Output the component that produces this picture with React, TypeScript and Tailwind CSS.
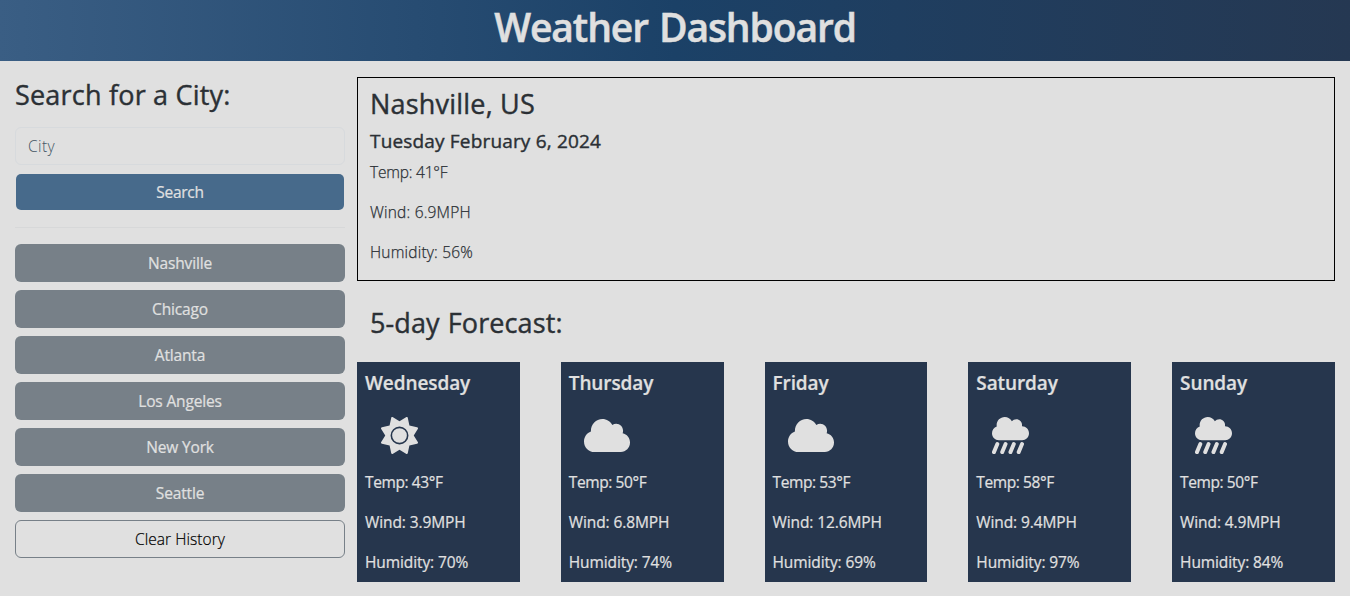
type IconName = "sun" | "cloud" | "rain";

type Day = {
  name: string;
  icon: IconName;
  temp: string;
  wind: string;
  humidity: string;
};

const cities = ["Nashville", "Chicago", "Atlanta", "Los Angeles", "New York", "Seattle"];

const days: Day[] = [
  { name: "Wednesday", icon: "sun", temp: "43°F", wind: "3.9MPH", humidity: "70%" },
  { name: "Thursday", icon: "cloud", temp: "50°F", wind: "6.8MPH", humidity: "74%" },
  { name: "Friday", icon: "cloud", temp: "53°F", wind: "12.6MPH", humidity: "69%" },
  { name: "Saturday", icon: "rain", temp: "58°F", wind: "9.4MPH", humidity: "97%" },
  { name: "Sunday", icon: "rain", temp: "50°F", wind: "4.9MPH", humidity: "84%" },
];

function WeatherIcon({ name }: { name: IconName }) {
  if (name === "sun") {
    return (
      <svg viewBox="0 0 512 512" className="ml-[0.3px] h-[37px] w-[37px] shrink-0" fill="currentColor">
        <path d="M361.5 1.2c5 2.1 8.6 6.6 9.6 11.9L393 119l105.9 21.8c5.3 1 9.8 4.6 11.9 9.6s1.5 10.7-1.6 15.2L453 256l56.2 90.3c3.1 4.5 3.7 10.2 1.6 15.2s-6.6 8.6-11.9 9.6L393 393 371.1 498.9c-1 5.3-4.6 9.8-9.6 11.9s-10.7 1.5-15.2-1.6L256 453l-90.3 56.2c-4.5 3.1-10.2 3.7-15.2 1.6s-8.6-6.6-9.6-11.9L119 393 13.1 371.1c-5.3-1-9.8-4.6-11.9-9.6s-1.5-10.7 1.6-15.2L59 256 2.8 165.7c-3.1-4.5-3.7-10.2-1.6-15.2s6.6-8.6 11.9-9.6L119 119 140.9 13.1c1-5.3 4.6-9.8 9.6-11.9s10.7-1.5 15.2 1.6L256 59 346.3 2.8c4.5-3.1 10.2-3.7 15.2-1.6z" />
        <circle cx="256" cy="256" r="113" fill="none" stroke="#26364d" strokeWidth="22" />
      </svg>
    );
  }
  if (name === "cloud") {
    return (
      <svg viewBox="0 32 640 448" className="-mt-px h-[33px] w-[46px] shrink-0" fill="currentColor" preserveAspectRatio="none">
        <path d="M0 336c0 79.5 64.5 144 144 144h368c70.7 0 128-57.3 128-128 0-61.9-44-113.6-102.4-125.4 4.1-10.7 6.4-22.4 6.4-34.6 0-53-43-96-96-96-19.7 0-38.1 6-53.3 16.2C367 64.2 315.3 32 256 32 167.6 32 96 103.6 96 192c0 2.7.1 5.4.2 8.1C40.2 219.8 0 273.2 0 336z" />
      </svg>
    );
  }
  return (
    <svg viewBox="0 0 512 512" className="h-[37px] w-[37px] shrink-0" fill="currentColor">
      <path d="M96 320c-53 0-96-43-96-96 0-42.5 27.6-78.6 65.9-91.2C64.7 126.1 64 119.1 64 112 64 50.1 114.1 0 176 0c43.1 0 80.5 24.3 99.2 60 14.7-17.1 36.5-28 60.8-28 44.2 0 80 35.8 80 80 0 5.5-.6 10.8-1.6 16h1.6c53 0 96 43 96 96s-43 96-96 96H96z" />
      <path
        d="M74 374L27 486M188 374l-47 112M302 374l-47 112M416 374l-47 112"
        fill="none"
        stroke="currentColor"
        strokeWidth="54"
        strokeLinecap="round"
      />
    </svg>
  );
}

function DayCard({ day }: { day: Day }) {
  return (
    <article className="h-[220px] w-[162.9px] bg-[#26364d] px-2 pt-2 text-[#e0e0e0]">
      <h4 className="h-[26px] text-[19px] leading-[26px] font-semibold tracking-[-0.1px] [-webkit-text-stroke:0.2px]">
        {day.name}
      </h4>
      <div className="flex h-[74px] items-center pt-[5px] pl-[15.4px]">
        <WeatherIcon name={day.icon} />
      </div>
      <div className="flex flex-col gap-4 text-[15.5px] leading-6 tracking-[-0.1px] [-webkit-text-stroke:0.2px]">
        <p className="tracking-[-0.4px]">Temp: {day.temp}</p>
        <p>Wind: {day.wind}</p>
        <p>Humidity: {day.humidity}</p>
      </div>
    </article>
  );
}

export default function App() {
  return (
    <div className="h-[596px] overflow-hidden bg-[#e0e0e0] font-['Open_Sans',sans-serif] text-[#2b3035]">
      <header className="h-[61px] bg-linear-to-r from-[#3a5e84] via-[#1b4167] to-[#253852] text-center text-[#e0e0e0]">
        <h1 className="text-[39px] leading-[54px] font-semibold tracking-[-1.1px] [-webkit-text-stroke:0.5px] [word-spacing:2px]">
          Weather Dashboard
        </h1>
      </header>
      <div className="flex gap-3 px-[15px] pt-4">
        <aside className="w-[330px]">
          <h3 className="h-[50px] text-[27px] leading-9 font-medium tracking-[0.2px] [-webkit-text-stroke:0.4px]">
            Search for a City:
          </h3>
          <input
            placeholder="City"
            className="block h-[38px] w-full rounded-md border border-[#d7dadd] px-3 text-[15.5px] font-light tracking-[0.4px] placeholder:text-[#465765]"
          />
          <button className="mx-px mt-[9px] block h-9 w-[328px] rounded-[5px] bg-[#476a8b] pt-0.5 text-[15.5px] tracking-[-0.3px] text-[#e0e0e0] [-webkit-text-stroke:0.2px]">
            Search
          </button>
          <hr className="mt-[17px] mb-4 border-[#d7d8d9]" />
          <div className="flex flex-col gap-2">
            {cities.map((city) => (
              <button
                key={city}
                className="h-[38px] rounded-md bg-[#778088] pt-0.5 text-[15.5px] tracking-[-0.15px] text-[#e0e0e0] [-webkit-text-stroke:0.2px]"
              >
                {city}
              </button>
            ))}
            <button className="h-[38px] rounded-md border border-[#778088] pt-0.5 text-[15.5px] font-light tracking-[0.05px] text-black [-webkit-text-stroke:0.2px]">
              Clear History
            </button>
          </div>
        </aside>
        <main className="w-[978px]">
          <section className="h-[204px] border border-black px-3 pt-2">
            <h3 className="h-[43px] text-[27px] leading-9 font-medium tracking-[0.2px] [-webkit-text-stroke:0.4px]">
              Nashville, US
            </h3>
            <h5 className="h-[31px] text-[19px] leading-6 font-medium tracking-[0.17px] [-webkit-text-stroke:0.4px]">
              Tuesday February 6, 2024
            </h5>
            <div className="flex flex-col gap-4 text-[15.5px] leading-6 font-light tracking-[0.2px] [-webkit-text-stroke:0.25px]">
              <p className="tracking-[-0.2px]">Temp: 41°F</p>
              <p>Wind: 6.9MPH</p>
              <p>Humidity: 56%</p>
            </div>
          </section>
          <h3 className="mt-6 mb-[21px] h-9 pl-[13px] text-[27px] leading-9 font-medium tracking-[0.1px] [-webkit-text-stroke:0.4px] [word-spacing:1px]">
            5-day Forecast:
          </h3>
          <section className="flex justify-between">
            {days.map((day) => (
              <DayCard key={day.name} day={day} />
            ))}
          </section>
        </main>
      </div>
    </div>
  );
}
